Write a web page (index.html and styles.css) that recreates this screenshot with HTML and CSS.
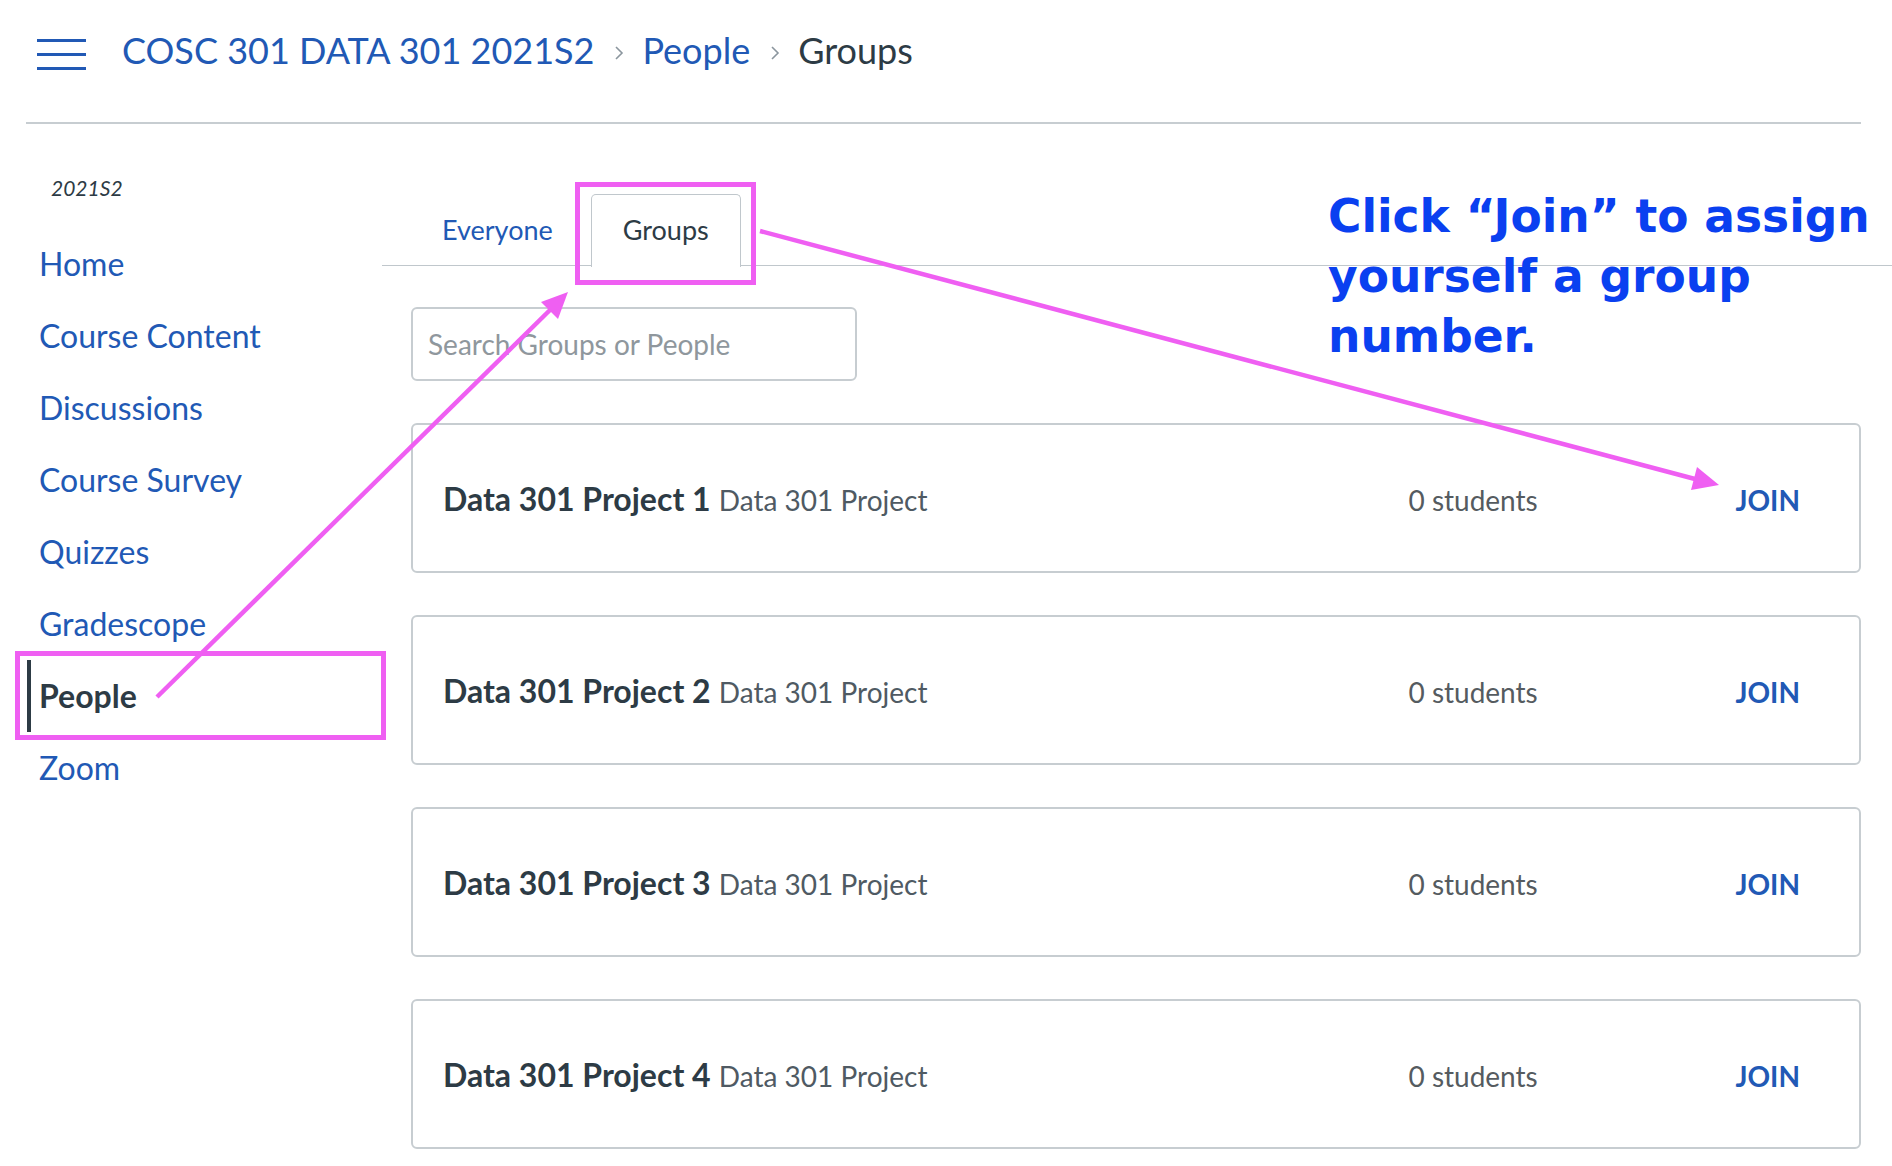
FILE: index.html
```html
<!DOCTYPE html>
<html lang="en">
<head>
<meta charset="utf-8">
<title>Groups</title>
<link rel="stylesheet" href="styles.css">
</head>
<body>
<header class="topbar">
  <span class="hamburger" aria-label="Menu"><i></i><i></i><i></i></span>
  <nav class="crumbs">
    <a href="#" class="crumb">COSC 301 DATA 301 2021S2</a>
    <svg class="chev" viewBox="0 0 10 16" width="10" height="16"><polyline points="2,2 8,8 2,14" fill="none" stroke="#8b969e" stroke-width="1.6"/></svg>
    <a href="#" class="crumb">People</a>
    <svg class="chev" viewBox="0 0 10 16" width="10" height="16"><polyline points="2,2 8,8 2,14" fill="none" stroke="#8b969e" stroke-width="1.6"/></svg>
    <span class="crumb current">Groups</span>
  </nav>
</header>
<div class="layout">
  <aside class="sidebar">
    <div class="term">2021S2</div>
    <ul class="menu">
      <li><a href="#">Home</a></li>
      <li><a href="#">Course Content</a></li>
      <li><a href="#">Discussions</a></li>
      <li><a href="#">Course Survey</a></li>
      <li><a href="#">Quizzes</a></li>
      <li><a href="#">Gradescope</a></li>
      <li class="active"><a href="#">People</a></li>
      <li><a href="#">Zoom</a></li>
    </ul>
  </aside>
  <main class="main">
    <ul class="tabs">
      <li class="tab"><a href="#">Everyone</a></li>
      <li class="tab selected"><a href="#">Groups</a></li>
    </ul>
    <div class="search"><span class="placeholder">Search Groups or People</span></div>
    <section class="groups">
      <div class="group">
        <div class="gname"><strong>Data 301 Project 1</strong> <span class="gcat">Data 301 Project</span></div>
        <div class="gcount">0 students</div>
        <a href="#" class="join">JOIN</a>
      </div>
      <div class="group">
        <div class="gname"><strong>Data 301 Project 2</strong> <span class="gcat">Data 301 Project</span></div>
        <div class="gcount">0 students</div>
        <a href="#" class="join">JOIN</a>
      </div>
      <div class="group">
        <div class="gname"><strong>Data 301 Project 3</strong> <span class="gcat">Data 301 Project</span></div>
        <div class="gcount">0 students</div>
        <a href="#" class="join">JOIN</a>
      </div>
      <div class="group">
        <div class="gname"><strong>Data 301 Project 4</strong> <span class="gcat">Data 301 Project</span></div>
        <div class="gcount">0 students</div>
        <a href="#" class="join">JOIN</a>
      </div>
    </section>
  </main>
</div>

<div class="note">Click “Join” to assign<br>yourself a group<br>number.</div>
<div class="hl hl-people"></div>
<div class="hl hl-tab"></div>
<svg class="arrows" width="1892" height="1166" viewBox="0 0 1892 1166">
  <line x1="157" y1="697" x2="550" y2="310" stroke="#ef5ff2" stroke-width="4.5"/>
  <polygon points="568,292 558,319 541,302" fill="#ef5ff2"/>
  <line x1="760" y1="231" x2="1695" y2="479" stroke="#ef5ff2" stroke-width="4.5"/>
  <polygon points="1719,485 1691,490 1697,467" fill="#ef5ff2"/>
</svg>
</body>
</html>
```

FILE: styles.css
```css
* { box-sizing: border-box; }
html, body { margin: 0; padding: 0; background: #fff; }
body {
  width: 1892px;
  height: 1166px;
  overflow: hidden;
  position: relative;
  font-family: Lato, "Noto Sans", "Liberation Sans", sans-serif;
  color: #2d3b45;
}
a { text-decoration: none; color: #2159b5; }
ul { list-style: none; margin: 0; padding: 0; }

/* header */
.topbar {
  display: flex;
  align-items: flex-start;
  height: 124px;
  margin: 0 31px 0 26px;
  padding: 28px 0 0 11px;
  border-bottom: 2px solid #c7cdd1;
}
.hamburger {
  display: flex;
  flex-direction: column;
  justify-content: space-between;
  width: 49px;
  height: 31px;
  margin-top: 11px;
  margin-right: 36px;
}
.hamburger i { display: block; height: 3px; background: #2159b5; }
.crumbs {
  display: flex;
  align-items: center;
  font-size: 36px;
  line-height: 44px;
}
.crumb { color: #2159b5; }
.crumb.current { color: #2d3b45; }
.chev { margin: 6px 18px 0 20px; }

/* layout */
.layout { display: flex; }
.sidebar {
  width: 382px;
  flex: none;
  padding: 49px 0 0 27px;
}
.term {
  font-style: italic;
  font-size: 21px;
  line-height: 30px;
  padding-left: 24px;
  color: #2d3b45;
  margin-bottom: 25px;
}
.menu li {
  height: 72px;
  line-height: 72px;
  font-size: 32px;
  border-left: 4px solid transparent;
  padding-left: 8px;
}
.menu li.active { border-left-color: #2d3b45; }
.menu li.active a { color: #2d3b45; font-weight: 700; }

/* main */
.main { flex: 1; padding-top: 70px; }
.tabs {
  display: flex;
  padding-left: 28px;
  border-bottom: 1px solid #c0c7cc;
  height: 72px;
}
.tab {
  height: 72px;
  border: 1px solid transparent;
  border-bottom: none;
  padding: 0 31px;
  font-size: 27px;
  line-height: 70px;
  margin-right: 6px;
}
.tab.selected {
  border-color: #c0c7cc;
  border-radius: 5px 5px 0 0;
  background: #fff;
  height: 73px;
}
.tab.selected a { color: #2d3b45; }

.search {
  width: 446px;
  height: 74px;
  margin: 41px 0 0 29px;
  border: 2px solid #c7cdd1;
  border-radius: 6px;
  padding-left: 15px;
  display: flex;
  align-items: center;
  font-size: 28px;
}
.placeholder { color: #8f979d; }

.groups {
  display: flex;
  flex-direction: column;
  gap: 42px;
  margin: 42px 31px 0 29px;
}
.group {
  height: 150px;
  border: 2px solid #c7cdd1;
  border-radius: 6px;
  display: grid;
  grid-template-columns: 1fr 327px auto;
  align-items: center;
  padding: 0 59px 0 30px;
}
.gname { font-size: 32px; color: #2d3b45; }
.gname strong { font-weight: 700; }
.gcat { font-size: 28px; color: #4f5a63; }
.gcount { font-size: 28px; color: #555b60; padding-top: 4px; }
.join { font-size: 28px; font-weight: 700; color: #2159b5; padding-top: 4px; }

/* annotations */
.note {
  position: absolute;
  left: 1328px;
  top: 187px;
  font-family: "DejaVu Sans", Verdana, sans-serif;
  font-weight: 700;
  font-size: 45.5px;
  line-height: 60px;
  color: #0a40f0;
  white-space: nowrap;
}
.hl {
  position: absolute;
  border: 5px solid #ef5ff2;
}
.hl-people { left: 15px; top: 651px; width: 371px; height: 89px; }
.hl-tab { left: 575px; top: 182px; width: 181px; height: 103px; }
.arrows { position: absolute; left: 0; top: 0; pointer-events: none; }
```
